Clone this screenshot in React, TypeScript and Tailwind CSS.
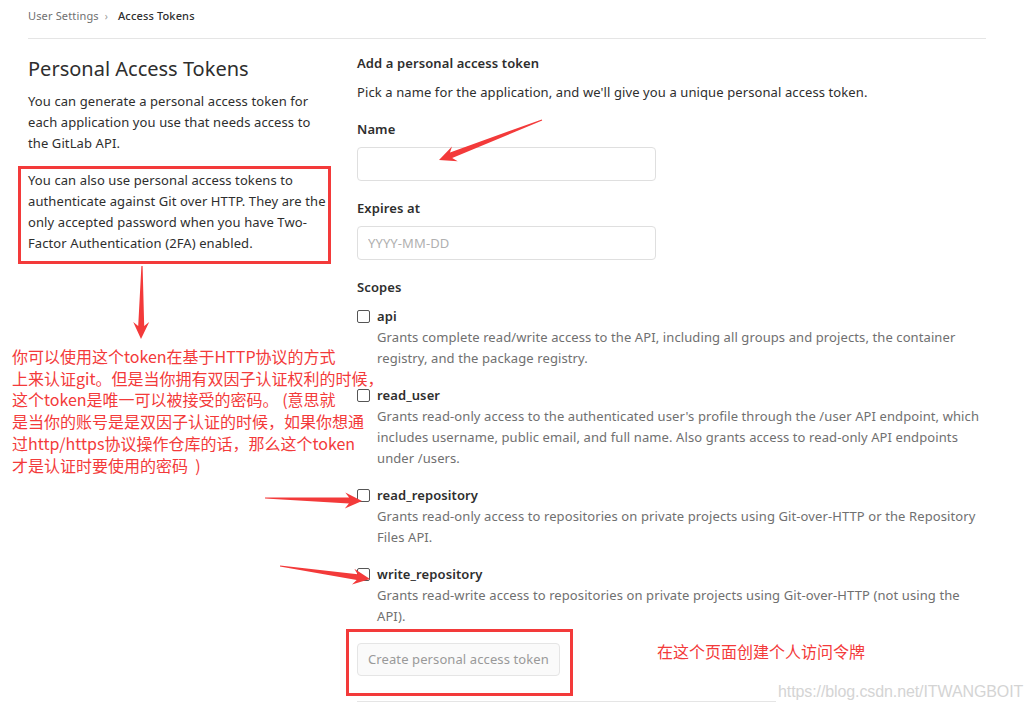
import React from "react";

function arrowPoints(
  x1: number,
  y1: number,
  x2: number,
  y2: number,
  H = 17,
  W = 8,
  w = 3,
  tailW = 0.6,
  notch = 4
) {
  const dx = x2 - x1;
  const dy = y2 - y1;
  const L = Math.hypot(dx, dy);
  const ux = dx / L;
  const uy = dy / L;
  const nx = -uy;
  const ny = ux;
  const bx = x2 - ux * H;
  const by = y2 - uy * H;
  const kx = x2 - ux * (H - notch);
  const ky = y2 - uy * (H - notch);
  const pts: [number, number][] = [
    [x1 + nx * tailW, y1 + ny * tailW],
    [kx + nx * w, ky + ny * w],
    [bx + nx * W, by + ny * W],
    [x2, y2],
    [bx - nx * W, by - ny * W],
    [kx - nx * w, ky - ny * w],
    [x1 - nx * tailW, y1 - ny * tailW],
  ];
  return pts.map((p) => `${p[0].toFixed(1)},${p[1].toFixed(1)}`).join(" ");
}

const scopes = [
  {
    name: "api",
    desc: "Grants complete read/write access to the API, including all groups and projects, the container registry, and the package registry.",
  },
  {
    name: "read_user",
    desc: "Grants read-only access to the authenticated user's profile through the /user API endpoint, which includes username, public email, and full name. Also grants access to read-only API endpoints under /users.",
  },
  {
    name: "read_repository",
    desc: "Grants read-only access to repositories on private projects using Git-over-HTTP or the Repository Files API.",
  },
  {
    name: "write_repository",
    desc: "Grants read-write access to repositories on private projects using Git-over-HTTP (not using the API).",
  },
];

export default function App() {
  return (
    <div
      className="relative w-[1031px] h-[712px] overflow-hidden bg-white text-[#2e2e2e]"
      style={{ fontFamily: '"Noto Sans", "Open Sans", sans-serif' }}
    >
      <div className="mx-[28px] w-[958px]">
        {/* breadcrumb */}
        <div className="h-[39px] border-b border-[#e5e5e5] flex items-center pb-[6px] text-[11px] tracking-[0.15px]">
          <span className="text-[#707070]">User Settings</span>
          <span className="ml-[6px] mr-[10px] text-[#9a9a9a] text-[10px]">›</span>
          <span className="text-[#2e2e2e] font-medium">Access Tokens</span>
        </div>

        <div className="flex">
          {/* left column */}
          <div className="w-[300px] shrink-0 text-[13px] leading-[21px] tracking-[0.1px]">
            <h4 className="mt-[16px] text-[20px] leading-[28px] font-normal tracking-normal text-[#2e2e2e]">
              Personal Access Tokens
            </h4>
            <p className="mt-[8px]">
              You can generate a personal access token for each application you use that needs access to the GitLab API.
            </p>
            <p className="mt-[16px]">
              You can also use personal access tokens to authenticate against Git over HTTP. They are the only accepted password when you have Two-Factor Authentication (2FA) enabled.
            </p>
          </div>

          {/* right column */}
          <div className="ml-[29px] flex-1 text-[13px] leading-[21px] tracking-[0.1px] pt-[14px]">
            <h5 className="font-semibold text-[13px]">Add a personal access token</h5>
            <p className="mt-[8px]">
              Pick a name for the application, and we'll give you a unique personal access token.
            </p>

            <div className="mt-[16px]">
              <label className="block font-semibold">Name</label>
              <input
                className="mt-[7px] block w-[299px] h-[34px] rounded-[4px] border border-[#dfdfdf] px-[10px] text-[13px] outline-none"
                type="text"
              />
            </div>

            <div className="mt-[17px]">
              <label className="block font-semibold">Expires at</label>
              <input
                className="mt-[7px] block w-[299px] h-[34px] rounded-[4px] border border-[#dfdfdf] px-[10px] text-[13px] outline-none placeholder:text-[#b0b0b0]"
                type="text"
                placeholder="YYYY-MM-DD"
              />
            </div>

            <div className="mt-[17px]">
              <label className="block font-semibold">Scopes</label>
              <div className="mt-[8px] flex flex-col gap-[16px]">
                {scopes.map((s) => (
                  <div key={s.name} className="flex">
                    <span className="mt-[4px] w-[13px] h-[13px] shrink-0 rounded-[2px] border border-[#555] bg-white" />
                    <div className="ml-[7px]">
                      <div className="font-semibold">{s.name}</div>
                      <div className="text-[#707070]">{s.desc}</div>
                    </div>
                  </div>
                ))}
              </div>
            </div>

            <div className="mt-[16px]">
              <button className="h-[33px] px-[10px] rounded-[4px] border border-[#e5e5e5] bg-[#fafafa] text-[#999] text-[13px]">
                Create personal access token
              </button>
            </div>
            <div className="mt-[25px] border-t border-[#e5e5e5]" />
          </div>
        </div>
      </div>

      {/* annotations */}
      <div className="absolute left-[18px] top-[166px] w-[313px] h-[98px] border-[3px] border-[#f33a3a]" />
      <div className="absolute left-[346px] top-[629px] w-[227px] h-[67px] border-[3px] border-[#f33a3a]" />

      <svg className="absolute left-0 top-0 pointer-events-none" width="1031" height="712">
        <g fill="#f33a3a">
          <polygon points={arrowPoints(142, 266, 141, 339, 17, 8, 3)} />
          <polygon points={arrowPoints(542, 120, 439, 160, 17, 8, 3)} />
          <polygon points={arrowPoints(265, 498, 362, 501, 17, 8, 3)} />
          <polygon points={arrowPoints(280, 566, 370, 579, 17, 8, 3)} />
        </g>
      </svg>

      <div
        className="absolute left-[12px] top-[346px] whitespace-nowrap text-[16px] leading-[21.7px] text-[#f33a3a]"
        style={{ fontFamily: '"Noto Sans CJK SC", "Noto Sans", sans-serif' }}
      >
        你可以使用这个token在基于HTTP协议的方式
        <br />
        上来认证git。但是当你拥有双因子认证权利的时候，
        <br />
        这个token是唯一可以被接受的密码。 (意思就
        <br />
        是当你的账号是是双因子认证的时候，如果你想通
        <br />
        过http/https协议操作仓库的话，那么这个token
        <br />
        才是认证时要使用的密码&nbsp;&nbsp;)
      </div>

      <div
        className="absolute left-[657px] top-[640px] whitespace-nowrap text-[16px] leading-[22px] text-[#f33a3a]"
        style={{ fontFamily: '"Noto Sans CJK SC", "Noto Sans", sans-serif' }}
      >
        在这个页面创建个人访问令牌
      </div>

      <div
        className="absolute left-[776px] top-[682px] bg-white pl-[2px] whitespace-nowrap text-[16px] leading-[20px] tracking-[-0.1px] text-[#d4d4d4]"
        style={{ fontFamily: '"Liberation Sans", Arial, sans-serif' }}
      >
        https://blog.csdn.net/ITWANGBOIT
      </div>
    </div>
  );
}
